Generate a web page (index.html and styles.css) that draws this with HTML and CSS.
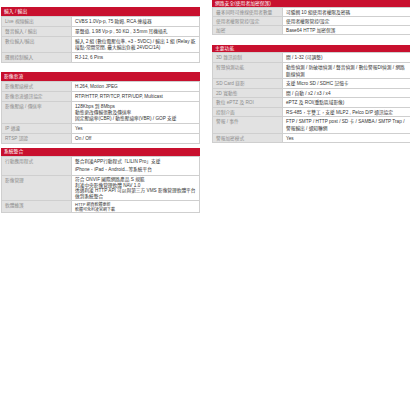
FILE: index.html
```html
<!DOCTYPE html>
<html lang="zh-Hant">
<head>
<meta charset="utf-8">
<link rel="stylesheet" href="styles.css">
</head>
<body>
<div class="page">
  <div class="col col-left">
    <section class="spec">
      <div class="spec-head">輸入 / 輸出</div>
      <table class="spec-table">
        <tr><td class="lbl">Live 視頻輸出</td><td class="val">CVBS 1.0Vp-p, 75 歐姆, RCA 連接器</td></tr>
        <tr><td class="lbl">聲音輸入 / 輸出</td><td class="val">單聲道, 1.98 Vp-p , 50 KΩ , 3.5mm 耳機插孔</td></tr>
        <tr><td class="lbl">數位輸入/輸出</td><td class="val">輸入 2 組 (數位電壓位準, +3 - 5VDC) / 輸出 1 組 (Relay 乾接點-常開常閉, 最大輸出負載 24VDC/1A)</td></tr>
        <tr><td class="lbl">邏輯控制輸入</td><td class="val">RJ-12, 6 Pins</td></tr>
      </table>
    </section>
    <section class="spec spec-wide-gap">
      <div class="spec-head">影像串流</div>
      <table class="spec-table">
        <tr><td class="lbl">影像壓縮模式</td><td class="val">H.264, Motion JPEG</td></tr>
        <tr><td class="lbl">影像串流通訊協定</td><td class="val">RTP/HTTP, RTP/TCP, RTP/UDP, Multicast</td></tr>
        <tr><td class="lbl">影像壓縮 / 傳送率</td><td class="val">128Kbps 到 8Mbps<br>動態更改傳輸張數及傳送率<br>固定壓縮率(CBR) / 動態壓縮率(VBR) / GOP 支援</td></tr>
        <tr><td class="lbl">IP 過濾</td><td class="val">Yes</td></tr>
        <tr><td class="lbl">RTSP 認證</td><td class="val">On / Off</td></tr>
      </table>
    </section>
    <section class="spec spec-small-gap">
      <div class="spec-head short">系統整合</div>
      <table class="spec-table">
        <tr><td class="lbl">行動應用程式</td><td class="val tall">整合利凌APP行動程式「LILIN Pro」支援<br>iPhone、iPad、Android...等系統平台</td></tr>
        <tr><td class="lbl">影像管理</td><td class="val dense">符合 ONVIF 國際網路產品 S 規範<br>利凌中央影像管理軟體 NAV 1.0<br>透過利凌 HTTP API 可以與第三方 VMS 影像管理軟體平台做到系統整合</td></tr>
        <tr><td class="lbl">軟體維護</td><td class="val small">HTTP 網頁軟體更新<br>軟體可免利凌官網下載</td></tr>
      </table>
    </section>
  </div>
  <div class="col col-right">
    <section class="spec">
      <div class="spec-head">網路安全(使用者加密保護)</div>
      <table class="spec-table compact">
        <tr><td class="lbl">最多同時可連線使用者數量</td><td class="val">可編輯 10 組使用者權限及密碼</td></tr>
        <tr><td class="lbl">使用者權限管控/設定</td><td class="val">使用者權限管控/設定</td></tr>
        <tr><td class="lbl">加密</td><td class="val">Base64 HTTP 加密保護</td></tr>
      </table>
    </section>
    <section class="spec">
      <div class="spec-head">主要功能</div>
      <table class="spec-table">
        <tr><td class="lbl">3D 雜訊抑制</td><td class="val">開 / 1-32 (可調整)</td></tr>
        <tr><td class="lbl">智慧偵測功能</td><td class="val">動態偵測 / 防破壞偵測 / 聲音偵測 / 數位警報DI偵測 / 網路斷線偵測</td></tr>
        <tr><td class="lbl">SD Card 錄影</td><td class="val">支援 Micro SD / SDHC 記憶卡</td></tr>
        <tr><td class="lbl">2D 寬動態</td><td class="val">開 / 自動 / x2 / x3 / x4</td></tr>
        <tr><td class="lbl">數位 ePTZ 及 ROI</td><td class="val">ePTZ 及 ROI(重點區域影像)</td></tr>
        <tr><td class="lbl">控制介面</td><td class="val">RS-485，半雙工，支援 MLP2 , Pelco D/P 通訊協定</td></tr>
        <tr><td class="lbl">警報 / 事件</td><td class="val">FTP / SMTP / HTTP post / SD 卡 / SAMBA / SMTP Trap / 警報輸出 / 通知聯網</td></tr>
        <tr><td class="lbl">警報加密模式</td><td class="val">Yes</td></tr>
      </table>
    </section>
  </div>
</div>
</body>
</html>
```
FILE: styles.css
```css
html, body {
  margin: 0;
  padding: 0;
  background: #ffffff;
  overflow: hidden;
  width: 410px;
  height: 410px;
}

.page {
  display: flex;
  gap: 12px;
  padding-left: 1px;
  font-family: "Liberation Sans", "Noto Sans CJK TC", sans-serif;
  font-size: 4.7px;
  color: #333333;
}

.col {
  display: flex;
  flex-direction: column;
  flex-shrink: 0;
}

.col-left {
  width: 199px;
  padding-top: 7px;
}

.spec-wide-gap {
  margin-top: 9px;
}

.spec-small-gap {
  margin-top: 4px;
}

.col-right {
  width: 199px;
  gap: 10px;
}

.spec-head {
  background: #c8102e;
  color: #ffffff;
  height: 9px;
  line-height: 9px;
  padding-left: 3px;
  font-size: 4.8px;
}

.spec-head.short {
  height: 8px;
  line-height: 8px;
}

.col-right .spec-head {
  height: 7px;
  line-height: 7px;
}

.spec-table {
  width: 100%;
  border-collapse: collapse;
  table-layout: fixed;
}

.spec-table td {
  border: 1px solid #cfcfcf;
  padding: 2px 2px 1px 3px;
  line-height: 6px;
  vertical-align: top;
}

.col-right .spec-table td {
  padding: 1px 2px 0.5px 3px;
  line-height: 7px;
}

.col-right .spec-table.compact td {
  padding: 0.5px 2px 0.5px 3px;
}

.spec-table .lbl {
  width: 64px;
  background: #e2e2e2;
  color: #8c8c8c;
}

.spec-table .val {
  background: #ffffff;
  color: #333333;
}

.spec-table .val.tall {
  line-height: 8.5px;
  padding-top: 0.5px;
  padding-bottom: 0;
}

.spec-table .val.dense {
  line-height: 5.5px;
  padding-top: 1.5px;
  padding-bottom: 0.5px;
}

.spec-table .val.small {
  font-size: 4px;
  line-height: 5px;
  padding-top: 1px;
  padding-bottom: 0;
}
```
